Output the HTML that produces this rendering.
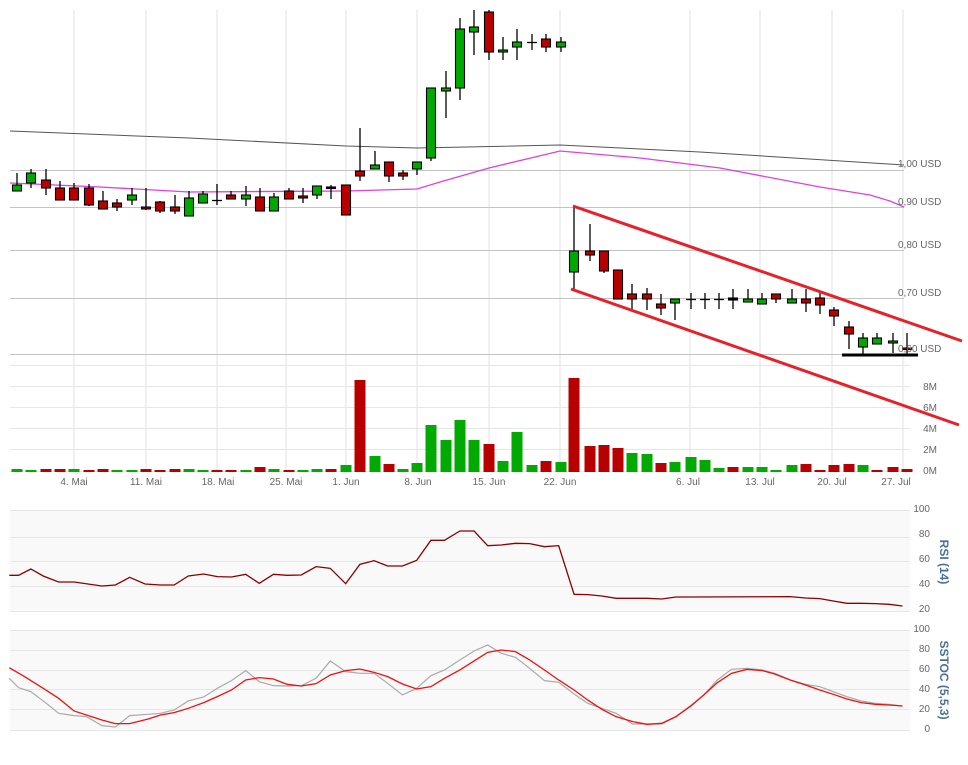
<!DOCTYPE html>
<html><head><meta charset="utf-8">
<style>
html,body{margin:0;padding:0;background:#fff;width:968px;height:765px;overflow:hidden}
svg{display:block;font-family:"Liberation Sans",sans-serif}
.ax{font-size:10px;fill:#666}
.ttl{font-size:12px;font-weight:bold;fill:#4a6f9c}
</style></head><body>
<svg id="s" width="968" height="765" viewBox="0 0 968 765" xmlns="http://www.w3.org/2000/svg">
<rect width="968" height="765" fill="#fff"/>
<rect x="10" y="510" width="900" height="101" fill="#f9f9f9"/>
<rect x="10" y="630" width="900" height="100" fill="#f9f9f9"/>
<g id="vg" stroke="#f0f0f0" stroke-width="2"></g>
<g stroke="#c4c4c4" stroke-width="1">
<line x1="10" y1="170.5" x2="904" y2="170.5"/>
<line x1="10" y1="207.5" x2="904" y2="207.5"/>
<line x1="10" y1="250.5" x2="904" y2="250.5"/>
<line x1="10" y1="298.5" x2="904" y2="298.5"/>
<line x1="10" y1="354.5" x2="904" y2="354.5"/>
</g>
<g stroke="#e6e6e6" stroke-width="1">
<line x1="10" y1="365.5" x2="910" y2="365.5"/>
<line x1="10" y1="386.5" x2="910" y2="386.5"/>
<line x1="10" y1="407.5" x2="910" y2="407.5"/>
<line x1="10" y1="428.5" x2="910" y2="428.5"/>
<line x1="10" y1="449.5" x2="910" y2="449.5"/>
<line x1="10" y1="471.5" x2="910" y2="471.5"/>
<line x1="10" y1="510.5" x2="910" y2="510.5"/>
<line x1="10" y1="537.5" x2="910" y2="537.5"/>
<line x1="10" y1="561.5" x2="910" y2="561.5"/>
<line x1="10" y1="586.5" x2="910" y2="586.5"/>
<line x1="10" y1="611.5" x2="910" y2="611.5"/>
<line x1="10" y1="630.5" x2="910" y2="630.5"/>
<line x1="10" y1="650.5" x2="910" y2="650.5"/>
<line x1="10" y1="670.5" x2="910" y2="670.5"/>
<line x1="10" y1="689.5" x2="910" y2="689.5"/>
<line x1="10" y1="709.5" x2="910" y2="709.5"/>
<line x1="10" y1="730.5" x2="910" y2="730.5"/>
</g>
<polyline fill="none" stroke="#555" stroke-width="1" points="10,131 189,138 346,146 417,148 560,145 700,152 904,165"/>
<polyline fill="none" stroke="#e040e0" stroke-width="1.3" points="10,183 100,187 189,192 346,191 417,189 440,182 489,168 560,151 640,158 720,168 820,187 870,195 890,201 904,207"/>
<g id="vol"></g>
<g id="cdl"></g>
<line x1="573" y1="206" x2="962" y2="341" stroke="#e8202a" stroke-width="3"/>
<line x1="571" y1="289" x2="959" y2="425" stroke="#e8202a" stroke-width="3"/>
<line x1="842" y1="355" x2="918" y2="355" stroke="#000" stroke-width="3"/>
<g class="ax">
<text x="898" y="167">1,00 USD</text>
<text x="898" y="205">0,90 USD</text>
<text x="898" y="248">0,80 USD</text>
<text x="898" y="296">0,70 USD</text>
<text x="898" y="352">0,60 USD</text>
</g>
<g class="ax" text-anchor="end">
<text x="937" y="390">8M</text>
<text x="937" y="411">6M</text>
<text x="937" y="432">4M</text>
<text x="937" y="453">2M</text>
<text x="937" y="474">0M</text>
<text x="930" y="512">100</text>
<text x="930" y="537">80</text>
<text x="930" y="562">60</text>
<text x="930" y="587">40</text>
<text x="930" y="612">20</text>
<text x="930" y="632">100</text>
<text x="930" y="652">80</text>
<text x="930" y="672">60</text>
<text x="930" y="692">40</text>
<text x="930" y="712">20</text>
<text x="930" y="732">0</text>
</g>
<g class="ax" text-anchor="middle">
<text x="74" y="485">4. Mai</text>
<text x="146" y="485">11. Mai</text>
<text x="218" y="485">18. Mai</text>
<text x="286" y="485">25. Mai</text>
<text x="346" y="485">1. Jun</text>
<text x="418" y="485">8. Jun</text>
<text x="489" y="485">15. Jun</text>
<text x="560" y="485">22. Jun</text>
<text x="688" y="485">6. Jul</text>
<text x="760" y="485">13. Jul</text>
<text x="832" y="485">20. Jul</text>
<text x="896" y="485">27. Jul</text>
</g>
<text class="ttl" transform="translate(940,562) rotate(90)" text-anchor="middle">RSI (14)</text>
<text class="ttl" transform="translate(940,680) rotate(90)" text-anchor="middle">SSTOC (5,5,3)</text>
<g transform="translate(0,495) scale(0.6173,0.3333)">
<polyline fill="none" stroke="#8b0000" stroke-width="1.3" vector-effect="non-scaling-stroke" points="15,241 30,241 50,222 70,243 95,261 120,261 165,273 187,270 210,247 235,267 260,270 282,270 305,243 330,237 352,245 375,246 398,238 420,265 443,238 465,241 488,240 512,215 535,220 560,266 583,208 606,197 628,213 652,213 675,196 698,136 720,136 745,108 768,108 790,152 812,150 835,145 858,146 882,155 905,152 930,298 952,299 975,303 998,310 1025,310 1048,310 1072,312 1095,306 1120,306 1280,305 1305,309 1328,311 1350,318 1372,325 1395,325 1418,326 1440,328 1462,333"/>
</g>
<g transform="translate(0,495) scale(0.6173,0.3333)">
<polyline fill="none" stroke="#aaa" stroke-width="1.2" vector-effect="non-scaling-stroke" points="15,550 30,578 50,590 75,625 95,655 120,662 140,665 165,692 187,696 210,662 240,658 260,655 282,645 305,618 330,606 352,580 375,557 398,527 420,560 443,572 465,573 488,572 512,550 535,498 560,530 583,535 606,535 628,565 652,600 675,580 698,542 720,525 745,495 768,468 790,450 812,475 835,487 858,520 882,557 905,562 930,597 952,625 975,640 998,655 1025,687 1048,687 1072,687 1095,665 1120,630 1140,600 1162,555 1185,523 1210,520 1235,525 1255,535 1280,555 1305,568 1328,575 1350,590 1372,605 1395,618 1418,625 1440,628 1462,633"/>
<polyline fill="none" stroke="#f01010" stroke-width="1.3" vector-effect="non-scaling-stroke" points="15,518 40,545 70,580 95,610 120,648 165,675 187,686 210,686 240,672 260,660 282,653 305,640 330,623 352,605 375,585 398,555 420,548 443,552 465,568 488,573 512,566 535,540 560,527 583,522 606,532 628,545 652,567 675,582 698,575 720,550 745,525 768,498 790,472 812,465 835,470 858,495 882,525 905,555 930,585 952,615 975,643 998,665 1025,680 1048,688 1072,685 1095,665 1120,632 1140,600 1162,563 1185,535 1210,523 1235,527 1255,537 1280,555 1305,570 1328,585 1350,598 1372,612 1395,623 1418,628 1440,630 1462,633"/>
</g>
</svg>
<script>
var NS="http://www.w3.org/2000/svg";
function el(p,t,a){var e=document.createElementNS(NS,t);for(var k in a)e.setAttribute(k,a[k]);p.appendChild(e);return e;}
var vg=document.getElementById('vg');
[74,146,217,286,346,417,489,560,690,760,832,903].forEach(function(x){el(vg,'line',{x1:x,y1:10,x2:x,y2:472});});
var C=[[17,'G',185,191,173,191],[31,'G',173,183,169,188],[46,'R',180,188,169,195],[60,'R',188,200,181,200],[74,'R',188,200,183,200],[89,'R',188,205,184,206],[103,'R',201,209,191,209],[117,'R',203,207,199,211],[132,'G',195,200,188,205],[146,'R',207,209,188,210],[160,'R',202,211,201,213],[175,'R',207,211,195,214],[189,'G',198,216,191,216],[203,'G',194,203,191,203],[217,'D',200,200,184,205],[231,'R',195,199,191,199],[246,'G',195,199,186,206],[260,'R',197,211,188,211],[274,'G',197,211,193,211],[289,'R',191,199,188,199],[303,'R',196,198,188,203],[317,'G',186,195,186,199],[331,'K',187,188,185,199],[346,'R',185,215,185,215],[360,'R',171,176,128,181],[375,'G',165,169,151,169],[389,'R',162,176,162,182],[403,'R',173,176,170,180],[417,'G',162,169,162,175],[431,'G',88,158,88,161],[446,'G',88,91,71,118],[460,'G',29,88,18,100],[474,'G',27,32,10,55],[489,'R',12,52,10,60],[503,'G',50,52,37,60],[517,'G',42,47,29,60],[532,'D',42,42,34,50],[546,'R',39,47,34,52],[561,'G',42,47,37,52],
[574,'G',251,272,205,289],[590,'R',251,255,224,261],[604,'R',251,271,251,273],[618,'R',270,299,270,299],[632,'R',294,299,284,310],[647,'R',294,299,288,310],[661,'R',304,308,294,315],[675,'G',299,303,299,320],[691,'D',299,299,293,309],[705,'D',299,299,293,309],[719,'D',299,299,293,309],[733,'K',298,300,289,309],[748,'G',299,302,289,302],[762,'G',299,304,293,304],[776,'R',294,299,294,303],[792,'G',299,303,289,303],[806,'R',299,303,289,312],[820,'R',298,305,293,314],[834,'R',310,316,307,326],[849,'R',327,334,321,349],[863,'G',338,347,333,355],[877,'G',338,344,333,344],[893,'G',341,343,333,353],[907,'R',348,349,333,355]];
var vol=document.getElementById('vol'),cd=document.getElementById('cdl');
var vcol=['G','G','R','R','G','R','R','G','G','R','R','R','G','G','R','R','G','R','G','R','G','G','R','G','R','G','R','G','G','G','G','G','G','R','G','G','G','R','G','R','R','R','R','G','G','R','G','G','G','G','R','G','G','G','G','R','R','R','R','G','R','R','R'];
var V2=[469,470,469,469,469,470,469,470,470,469,470,469,469,470,470,470,470,467,469,470,470,469,469,465,380,456,464,469,463,425,440,420,440,444,461,432,465,461,462,378,446,445,448,453,454,463,462,457,460,468,467,467,467,470,465,464,470,465,464,465,470,467,469];
C.forEach(function(c,i){
 var x=c[0],t=c[1];
 var vt=V2[i];el(vol,'rect',{x:x-5.5,y:vt,width:11,height:472-vt,fill:vcol[i]=='G'?'#00aa00':'#b80000'});
 el(cd,'line',{x1:x,y1:c[4],x2:x,y2:c[5],stroke:'#000','stroke-width':1.3});
 if(t=='D'){el(cd,'line',{x1:x-5,y1:c[2]+.5,x2:x+5,y2:c[2]+.5,stroke:'#000','stroke-width':1.3});}
 else{var h=Math.max(c[3]-c[2],1.5);el(cd,'rect',{x:x-4.5,y:c[2],width:9,height:h,fill:t=='G'?'#00a800':(t=='R'?'#b80000':'#000'),stroke:'#000','stroke-width':1.1});}
});
</script>
</body></html>
